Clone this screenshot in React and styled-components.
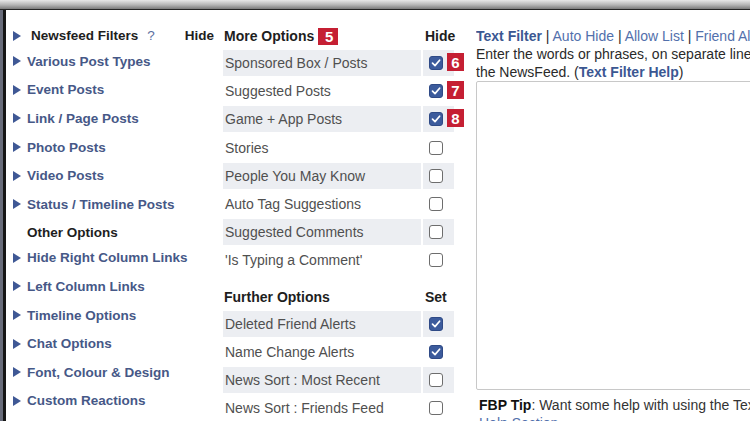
import React from "react";
import styled, { createGlobalStyle } from "styled-components";

const GlobalStyle = createGlobalStyle`
  body {
    margin: 0;
    background: #fff;
    font-family: "Liberation Sans", Arial, sans-serif;
    overflow: hidden;
  }
`;

const leftLinks = [
  "Various Post Types",
  "Event Posts",
  "Link / Page Posts",
  "Photo Posts",
  "Video Posts",
  "Status / Timeline Posts",
];

const otherLinks = [
  "Hide Right Column Links",
  "Left Column Links",
  "Timeline Options",
  "Chat Options",
  "Font, Colour & Design",
  "Custom Reactions",
];

const moreOptions = [
  { label: "Sponsored Box / Posts", checked: true, badge: 6 },
  { label: "Suggested Posts", checked: true, badge: 7 },
  { label: "Game + App Posts", checked: true, badge: 8 },
  { label: "Stories" },
  { label: "People You May Know" },
  { label: "Auto Tag Suggestions" },
  { label: "Suggested Comments" },
  { label: "'Is Typing a Comment'" },
];

const furtherOptions = [
  { label: "Deleted Friend Alerts", checked: true },
  { label: "Name Change Alerts", checked: true },
  { label: "News Sort : Most Recent" },
  { label: "News Sort : Friends Feed" },
];

const Check = ({ checked }) => (
  <Box $checked={checked}>
    {checked && (
      <svg width="10" height="10" viewBox="0 0 10 10">
        <path d="M1.5 5.2 L4 7.6 L8.6 2.2" fill="none" stroke="#fff" strokeWidth="1.7" strokeLinecap="round" strokeLinejoin="round" />
      </svg>
    )}
  </Box>
);

const OptionRows = ({ items }) =>
  items.map((item, i) => (
    <OptionRow key={item.label}>
      <LabelCell $shaded={i % 2 === 0}>{item.label}</LabelCell>
      <CheckCell $shaded={i % 2 === 0}>
        <Check checked={item.checked} />
        {item.badge && <StepBadge>{item.badge}</StepBadge>}
      </CheckCell>
    </OptionRow>
  ));

const App = () => {
  return (
    <>
      <GlobalStyle />
      <Screen>
        <TopBar />
        <Body>
          <Panel>
            <LeftColumn>
              <HeadRow>
                <Arrow />
                <HeadTitle>Newsfeed Filters</HeadTitle>
                <Help>?</Help>
                <HideLabel>Hide</HideLabel>
              </HeadRow>
              {leftLinks.map((t) => (
                <LinkRow key={t}>
                  <Arrow />
                  {t}
                </LinkRow>
              ))}
              <SubHead>Other Options</SubHead>
              {otherLinks.map((t) => (
                <LinkRow key={t}>
                  <Arrow />
                  {t}
                </LinkRow>
              ))}
            </LeftColumn>

            <MiddleColumn>
              <OptionHead>
                <span>
                  More Options <StepBadge $inline>5</StepBadge>
                </span>
                <span>Hide</span>
              </OptionHead>
              <OptionRows items={moreOptions} />
              <OptionHead $spaced>
                <span>Further Options</span>
                <span>Set</span>
              </OptionHead>
              <OptionRows items={furtherOptions} />
            </MiddleColumn>

            <RightColumn>
              <Line>
                <Tab $active>Text Filter</Tab> | <Tab>Auto Hide</Tab> | <Tab>Allow List</Tab> |{" "}
                <Tab>Friend Alerts</Tab> | <Tab>Keywords</Tab>
              </Line>
              <Line>Enter the words or phrases, on separate lines, that you want to hide from</Line>
              <Line>
                the NewsFeed. (<Tab $active>Text Filter Help</Tab>)
              </Line>
              <FilterBox />
              <Tip>
                <b>FBP Tip</b>: Want some help with using the Text Filter? Visit the
              </Tip>
              <Tip>
                <Tab>Help Section</Tab>
              </Tip>
            </RightColumn>
          </Panel>
        </Body>
      </Screen>
    </>
  );
};
export default App;

const Screen = styled.div`
  width: 750px;
  height: 421px;
  overflow: hidden;
  display: flex;
  flex-direction: column;
`;

const TopBar = styled.div`
  height: 9px;
  flex-shrink: 0;
  background: linear-gradient(#e8e8e8, #b4b4b4 55%, #7a7a7a);
  border-bottom: 1px solid #262626;
`;

const Body = styled.div`
  flex: 1;
  display: flex;
  background: #686c7a;
  padding-left: 3px;
`;

const Panel = styled.div`
  flex: 1;
  background: #fff;
  border-left: 3px solid #161616;
  display: grid;
  grid-template-columns: 216px 254px 1fr;
  overflow: hidden;
`;

const LeftColumn = styled.div`
  padding: 12px 0 0 7px;
  display: flex;
  flex-direction: column;
`;

const Arrow = styled.span`
  width: 0;
  height: 0;
  border-left: 8px solid #3f5895;
  border-top: 5px solid transparent;
  border-bottom: 5px solid transparent;
  margin-right: 6px;
  flex-shrink: 0;
`;

const HeadRow = styled.div`
  height: 25px;
  display: flex;
  align-items: center;
  font-size: 13.5px;
  font-weight: bold;
  color: #1e1e1e;
  padding-top: 2px;
  box-sizing: border-box;

  ${Arrow} {
    margin-right: 10px;
  }
`;

const HeadTitle = styled.span``;

const Help = styled.span`
  font-weight: normal;
  color: #5b6f9f;
  margin-left: 9px;
`;

const HideLabel = styled.span`
  margin-left: auto;
  margin-right: 8px;
`;

const LinkRow = styled.div`
  height: 28.6px;
  display: flex;
  align-items: center;
  font-size: 13.5px;
  font-weight: bold;
  color: #465887;
  white-space: nowrap;
`;

const SubHead = styled.div`
  height: 25px;
  display: flex;
  align-items: flex-end;
  padding-left: 14px;
  padding-bottom: 4px;
  box-sizing: border-box;
  font-size: 13.5px;
  font-weight: bold;
  color: #1e1e1e;
`;

const MiddleColumn = styled.div`
  padding: 12px 0 0 0;
  display: flex;
  flex-direction: column;
`;

const OptionHead = styled.div`
  display: grid;
  grid-template-columns: 199px 31px;
  column-gap: 2px;
  align-items: center;
  height: 28px;
  margin-top: ${(p) => (p.$spaced ? "7px" : "0")};
  font-size: 14px;
  font-weight: bold;
  color: #1e1e1e;

  span {
    display: flex;
    align-items: center;
    padding-left: 2px;
  }
`;

const OptionRow = styled.div`
  display: grid;
  grid-template-columns: 198px 31px;
  column-gap: 2px;
  height: 26px;
  margin: 0 0 2.2px 1px;
`;

const LabelCell = styled.div`
  display: flex;
  align-items: center;
  padding-left: 2px;
  font-size: 14px;
  color: #505050;
  white-space: nowrap;
  background: ${(p) => (p.$shaded ? "#eceef2" : "transparent")};
`;

const CheckCell = styled.div`
  position: relative;
  display: flex;
  align-items: center;
  padding-left: 6px;
  background: ${(p) => (p.$shaded ? "#eceef2" : "transparent")};
`;

const Box = styled.span`
  width: 14px;
  height: 14px;
  box-sizing: border-box;
  border-radius: 3px;
  display: flex;
  align-items: center;
  justify-content: center;
  background: ${(p) => (p.$checked ? "#3c5b9c" : "#fff")};
  border: 1px solid ${(p) => (p.$checked ? "#2f4a86" : "#6d6d6d")};
`;

const StepBadge = styled.span`
  display: inline-flex;
  align-items: center;
  justify-content: center;
  width: 17px;
  height: 18px;
  background: #c51f33;
  color: #fff;
  font-size: 15px;
  font-weight: bold;
  ${(p) =>
    p.$inline
      ? "margin-left: 4px; height: 17px; width: 18px;"
      : "position: absolute; left: 24px; top: 3px;"}
`;

const RightColumn = styled.div`
  padding-top: 17px;
  display: flex;
  flex-direction: column;
  overflow: hidden;
  min-width: 0;
`;

const Line = styled.div`
  height: 18px;
  line-height: 18px;
  font-size: 14px;
  color: #2a2a2a;
  white-space: nowrap;
`;

const Tab = styled.span`
  color: ${(p) => (p.$active ? "#3b5792" : "#5270ac")};
  font-weight: ${(p) => (p.$active ? "bold" : "normal")};
`;

const FilterBox = styled.div`
  flex-shrink: 0;
  width: 320px;
  height: 309px;
  border: 1px solid #c8c8c8;
  box-sizing: border-box;
  border-radius: 2px;
`;

const Tip = styled.div`
  flex-shrink: 0;
  padding-left: 3px;
  margin-top: 6px;
  height: 18px;
  line-height: 18px;
  font-size: 14px;
  color: #333;
  white-space: nowrap;

  & + & {
    margin-top: 0;
  }

  b {
    color: #111;
  }
`;
